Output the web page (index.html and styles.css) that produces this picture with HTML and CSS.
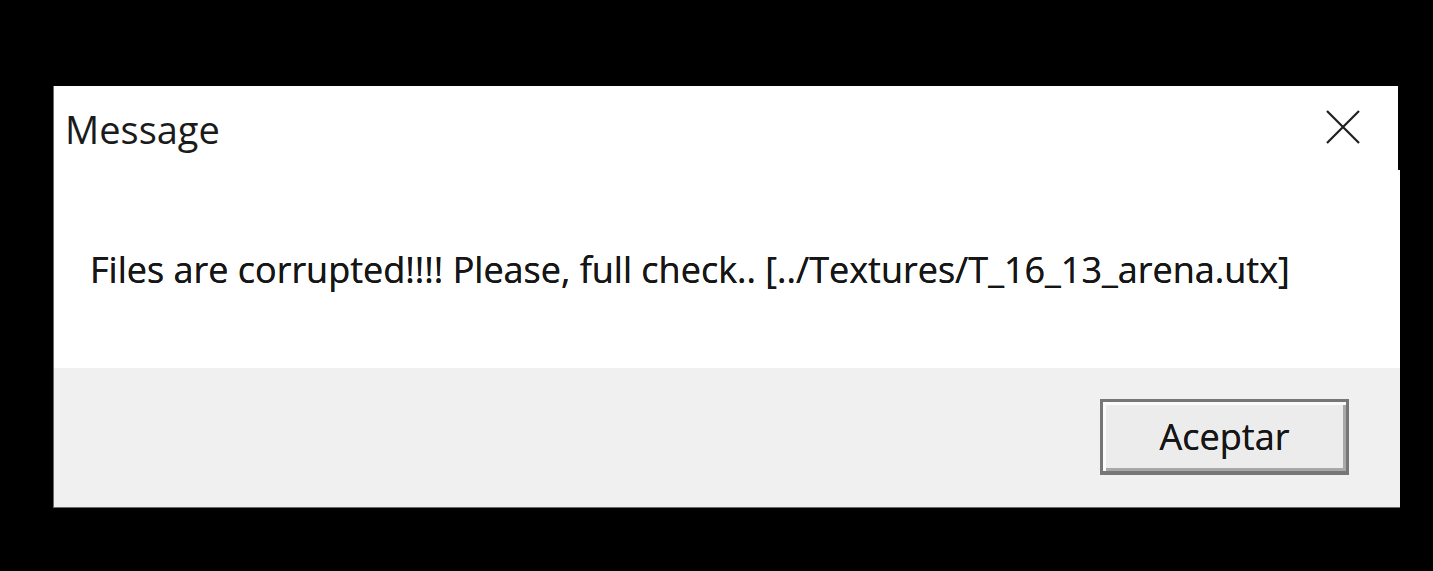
FILE: index.html
```html
<!DOCTYPE html>
<html lang="en">
<head>
<meta charset="utf-8">
<title>Message</title>
<link rel="stylesheet" href="styles.css">
</head>
<body>
<div class="dialog">
  <div class="titlebar">
    <span class="title">Message</span>
    <span class="close" aria-label="Close">
      <svg width="34" height="34" viewBox="0 0 34 34"><path d="M1 1 L33 33 M33 1 L1 33" stroke="#1f1f1f" stroke-width="2.2" fill="none"/></svg>
    </span>
  </div>
  <div class="content">
    <p class="msg">Files are corrupted!!!! Please, full check.. [../Textures/T_16_13_arena.utx]</p>
  </div>
  <div class="footer">
    <button class="btn">Aceptar</button>
  </div>
</div>
</body>
</html>
```
FILE: styles.css
```css
html, body {
  margin: 0;
  padding: 0;
  background: #000;
}
body {
  width: 1433px;
  height: 571px;
  overflow: hidden;
  font-family: "Open Sans", "Noto Sans", sans-serif;
  color: #1b1b1b;
}
.dialog {
  margin: 86px 0 0 53px;
  width: 1347px;
  display: flex;
  flex-direction: column;
}
.titlebar {
  width: 1345px;
  height: 84px;
  background: #fff;
  display: flex;
  justify-content: space-between;
  align-items: flex-start;
  box-sizing: border-box;
  padding: 0 38px 0 11px;
  border-left: 1px solid #6a6a6a;
}
.title {
  font-size: 38px;
  line-height: 40px;
  margin-top: 23px;
}
.close {
  display: block;
  margin-top: 24px;
  width: 34px;
  height: 34px;
}
.close svg { display: block; }
.content {
  background: #fff;
  height: 198px;
  box-sizing: border-box;
  padding: 80px 0 0 36px;
  border-left: 1px solid #6a6a6a;
}
.msg {
  margin: 0;
  font-size: 36px;
  line-height: 40px;
  white-space: nowrap;
  color: #161616;
  text-shadow: 0 0 0.6px #161616;
}
.footer {
  background: #f0f0f0;
  height: 140px;
  box-sizing: border-box;
  display: flex;
  justify-content: flex-end;
  align-items: flex-start;
  padding: 31px 51px 0 0;
  border-left: 1px solid #6a6a6a;
  border-bottom: 1px solid #6a6a6a;
}
.btn {
  width: 249px;
  height: 76px;
  box-sizing: border-box;
  background: #ececec;
  border: 3px solid #767676;
  border-bottom-width: 4px;
  box-shadow: inset 3px 3px 0 #fbfbfb, inset -3px -3px 0 #a8a8a8;
  font-family: "Open Sans", "Noto Sans", sans-serif;
  font-size: 36px;
  line-height: 40px;
  color: #161616;
  text-shadow: 0 0 0.6px #161616;
  padding: 0;
  margin: 0;
}
```
